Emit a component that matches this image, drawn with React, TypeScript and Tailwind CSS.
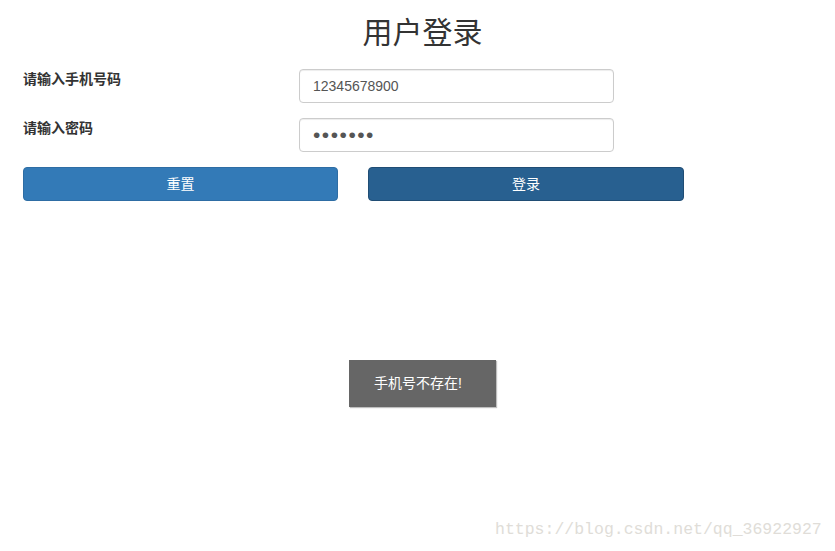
import { FC } from 'react';

const cjk = '"Liberation Sans", "Noto Sans CJK SC", sans-serif';

const FormRow: FC<{ label: string; children: React.ReactNode }> = ({ label, children }) => (
  <div className="flex items-start">
    <label className="w-[276px] text-[14px] font-bold leading-[20px] text-[#333]">{label}</label>
    {children}
  </div>
);

export default function App() {
  return (
    <div className="relative h-[551px] w-[835px] overflow-hidden bg-white" style={{ fontFamily: cjk }}>
      <h1 className="pl-[10px] pt-[14px] text-center text-[30px] font-normal leading-[38px] text-[#333]">
        用户登录
      </h1>

      <div className="flex flex-col gap-[15px] pl-[23px] pt-[17px]">
        <FormRow label="请输入手机号码">
          <input
            readOnly
            value="12345678900"
            className="h-[34px] w-[315px] rounded-[4px] border border-[#ccc] px-[13px] text-[14px] text-[#555] shadow-[inset_0_1px_1px_rgba(0,0,0,0.075)] outline-none"
          />
        </FormRow>
        <FormRow label="请输入密码">
          <input
            readOnly
            type="password"
            value="1234567"
            className="h-[34px] w-[315px] rounded-[4px] border border-[#ccc] px-[13px] text-[21px] tracking-[1.5px] text-[#555] shadow-[inset_0_1px_1px_rgba(0,0,0,0.075)] outline-none"
          />
        </FormRow>
        <div className="flex gap-[30px]">
          <button className="h-[34px] w-[315px] rounded-[4px] border border-[#2e6da4] bg-[#337ab7] text-[14px] text-white">
            重置
          </button>
          <button className="h-[34px] w-[316px] rounded-[4px] border border-[#204d74] bg-[#286090] text-[14px] text-white">
            登录
          </button>
        </div>
      </div>

      <div className="absolute left-[349px] top-[360px] flex h-[47px] w-[147px] items-center justify-center bg-[#666] pr-[9px] text-[14px] text-white shadow-[1px_1px_1px_rgba(0,0,0,0.25)]">
        手机号不存在!
      </div>

      <div
        className="absolute left-[495px] top-[519px] text-[16.5px] leading-[22px] text-[#e0ddd8]"
        style={{ fontFamily: '"Liberation Mono", monospace' }}
      >
        https://blog.csdn.net/qq_36922927
      </div>
    </div>
  );
}
